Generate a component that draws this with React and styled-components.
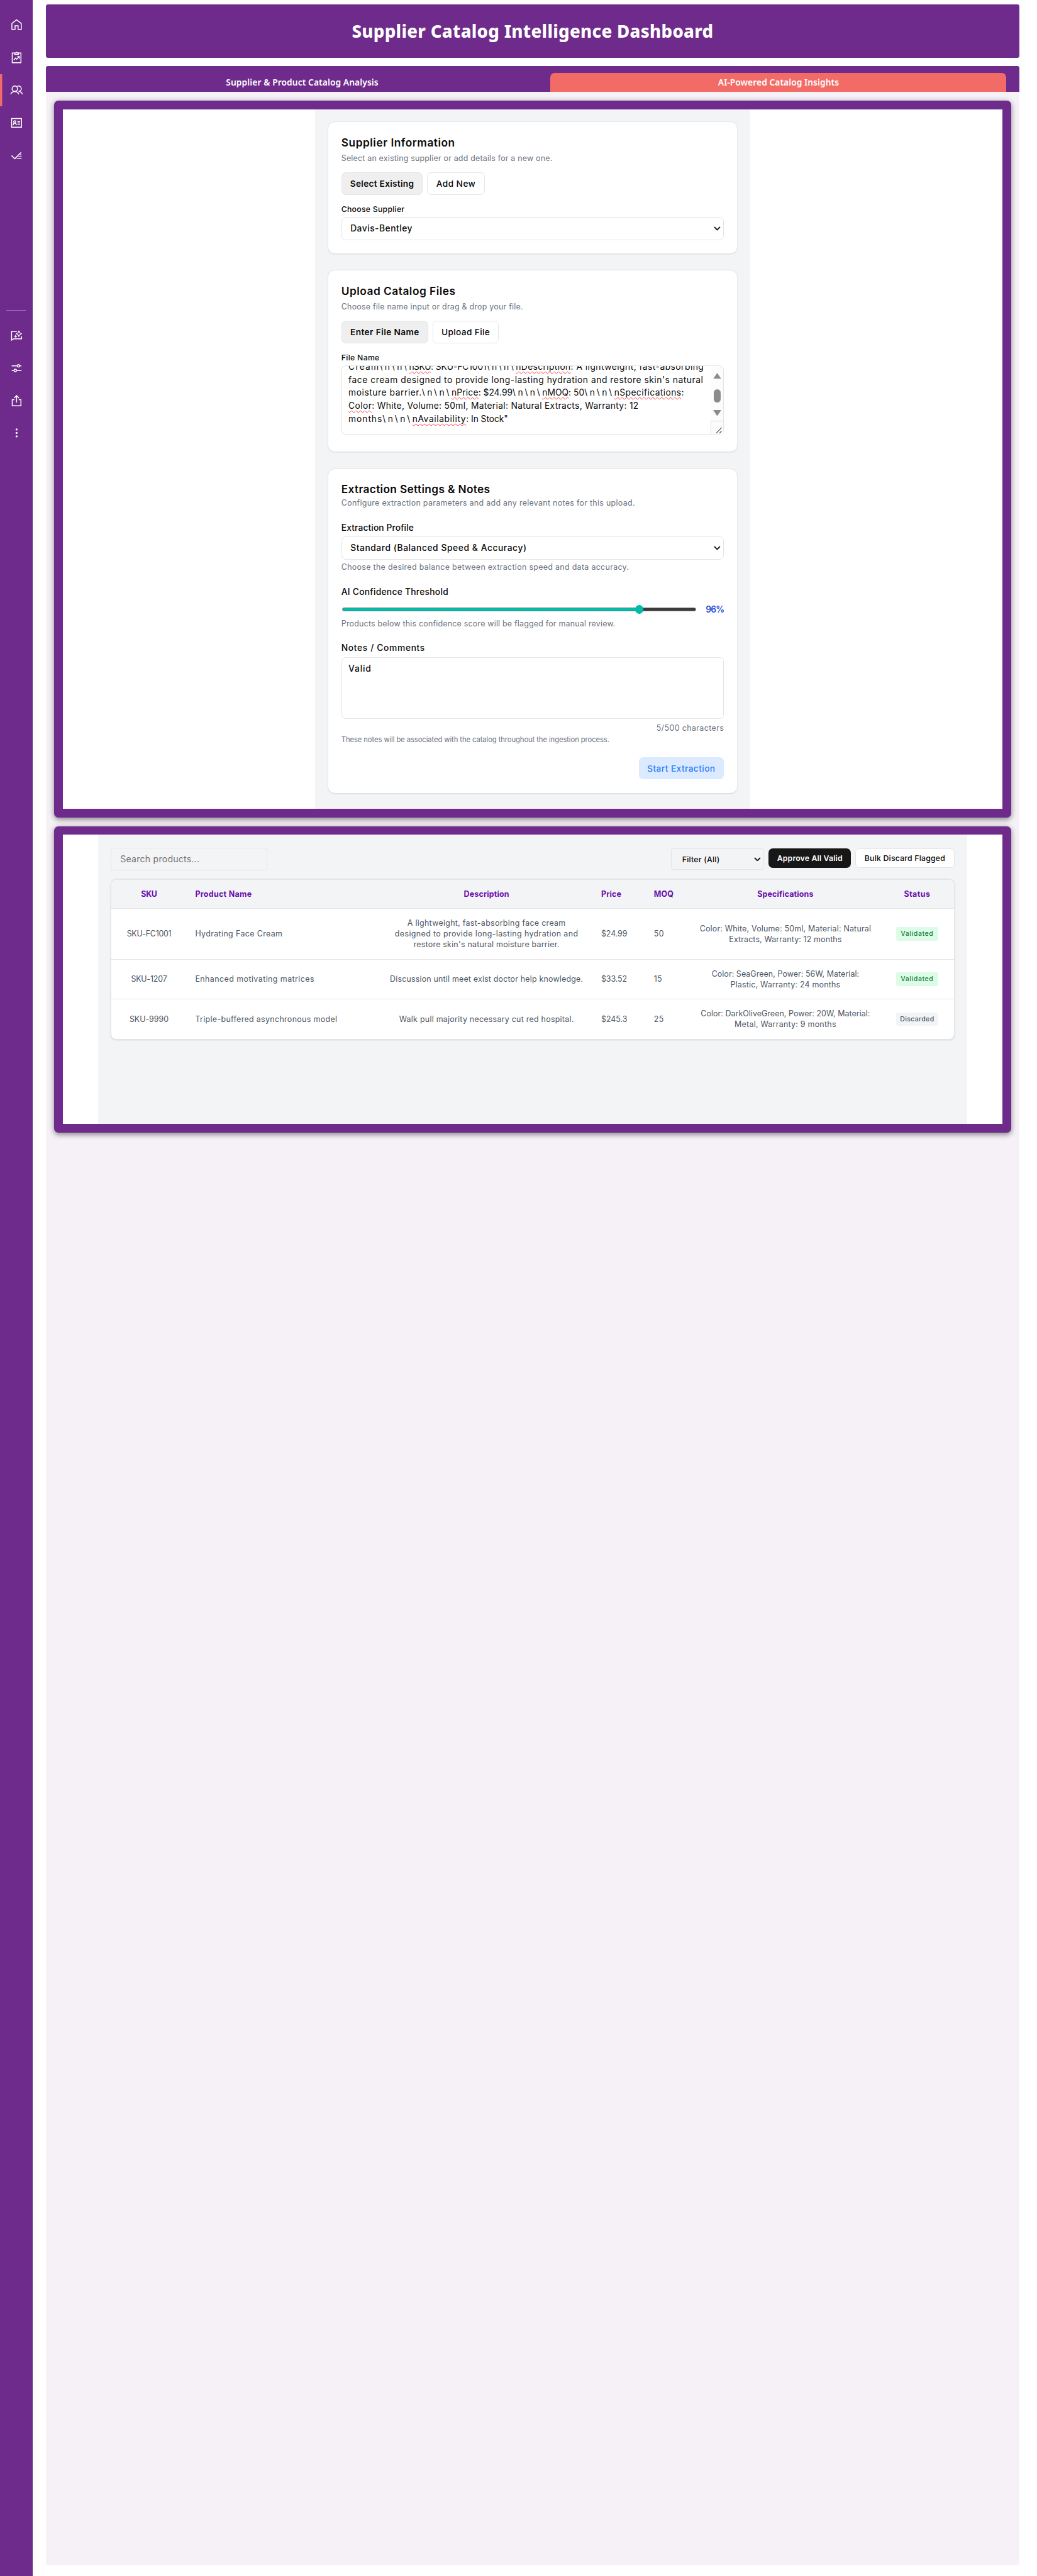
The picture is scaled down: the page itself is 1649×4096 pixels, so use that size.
import React, { useLayoutEffect, useRef, useState } from "react";
import styled, { createGlobalStyle, css } from "styled-components";

/* 1rem stands for ten design pixels */
const ROOT = 8.642;

const Global = createGlobalStyle`
  *, *::before, *::after { box-sizing: border-box; }
  html { font-size: ${ROOT}px; background: #fff; }
  body { margin: 0; font-family: Inter, "Open Sans", sans-serif; font-size: 1.44rem; color: #0a0a0a; }
  button, select, textarea, input { font: inherit; }
`;

/* Inline text set to a given measure by spreading its letters */
const FitSpan = styled.span`
  display: inline-block;
  white-space: pre;
`;

function Fit({ w, tight, children }) {
  const ref = useRef(null);
  const [track, setTrack] = useState(0);
  useLayoutEffect(() => {
    const natural = ref.current.getBoundingClientRect().width;
    const bearing = tight ? 0 : 1.4;
    setTrack((((w + bearing) * ROOT) / 10 - natural) / children.length);
  }, []);
  return (
    <FitSpan ref={ref} style={{ letterSpacing: `${track}px` }}>
      {children}
    </FitSpan>
  );
}

const Page = styled.div`
  display: flex;
  height: 4096px;
  background: #fff;
  overflow: hidden;
`;

const Sidebar = styled.nav`
  width: 6rem;
  flex: none;
  background: #6e2b8b;
  display: flex;
  flex-direction: column;
  padding-top: 1.6rem;
`;

const NavItem = styled.a`
  height: 6rem;
  display: flex;
  align-items: center;
  justify-content: center;
  box-shadow: ${(p) => (p.$active ? "inset 0.4rem 0 #f26b67" : "none")};
  color: #fff;
  svg { width: 2.4rem; height: 2.4rem; display: block; overflow: visible; }
`;

const NavDivider = styled.div`
  height: 1px;
  margin: 25.4rem 1.2rem 1.6rem;
  background: rgba(255, 255, 255, 0.35);
`;

const Main = styled.main`
  flex: 1;
  display: flex;
  flex-direction: column;
  padding: 0.8rem 3.2rem 2rem 2.4rem;
`;

const Banner = styled.header`
  height: 9.8rem;
  flex: none;
  border-radius: 0.4rem;
  background: #6e2b8b;
  display: flex;
  align-items: center;
  justify-content: center;
`;

const BannerTitle = styled.h1`
  margin: 0;
  color: #fff;
  font: 800 3.2rem/4.8rem "Noto Sans", sans-serif;
`;

const TabBar = styled.div`
  height: 4.7rem;
  flex: none;
  margin-top: 1.6rem;
  padding: 1.2rem 2.4rem 0;
  border-radius: 0.4rem 0.4rem 0 0;
  background: #6e2b8b;
  display: flex;
  gap: 0.9rem;
`;

const Tab = styled.div`
  width: ${(p) => p.$w}rem;
  border-radius: 0.8rem 0.8rem 0 0;
  background: ${(p) => (p.$active ? "#f26b67" : "transparent")};
  color: #fff;
  font: 600 1.6rem/3.5rem "Noto Sans", sans-serif;
  text-align: center;
`;

const Content = styled.div`
  flex: 1;
  background: #f5f1f7;
  border-radius: 0 0 0.4rem 0.4rem;
  padding: 1.6rem;
  display: flex;
  flex-direction: column;
  gap: 1.6rem;
`;

const Panel = styled.section`
  height: ${(p) => p.$h}rem;
  flex: none;
  padding: 1.6rem;
  border-radius: 0.8rem;
  background: #6e2b8b;
  box-shadow: 0 0.3rem 1rem rgba(0, 0, 0, 0.45);
`;

const PanelBody = styled.div`
  height: 100%;
  background: #fff;
  display: flex;
  justify-content: center;
`;

const Sheet = styled.div`
  width: ${(p) => p.$w}rem;
  background: #f3f4f6;
  padding: 2.4rem;
`;

const Card = styled.div`
  height: ${(p) => p.$h}rem;
  padding: 2.4rem;
  margin-bottom: 3.2rem;
  border-radius: 1.2rem;
  background: #fff;
  box-shadow: 0 0.1rem 0.3rem rgba(0, 0, 0, 0.14);
`;

const CardTitle = styled.h2`
  margin: 0;
  font-size: 2rem;
  line-height: 2.8rem;
  font-weight: 600;
`;

const Hint = styled.p`
  margin: ${(p) => p.$mt ?? 0.4}rem 0 0;
  font-size: ${(p) => p.$size ?? 1.44}rem;
  line-height: ${(p) => (p.$size ? 1.8 : 2)}rem;
  text-align: ${(p) => (p.$right ? "right" : "left")};
  color: #6b7280;
`;

const Label = styled.div`
  margin-top: ${(p) => p.$mt ?? 1.6}rem;
  margin-bottom: 0.4rem;
  font-size: ${(p) => (p.$large ? 1.6 : 1.42)}rem;
  line-height: ${(p) => (p.$large ? 2.4 : 2)}rem;
  font-weight: 450;
`;

const ButtonRow = styled.div`
  display: flex;
  gap: 0.8rem;
  margin-top: 1.6rem;
`;

const Toggle = styled.button`
  width: ${(p) => p.$w}rem;
  height: 4.2rem;
  padding: 0;
  border: 1px solid #e5e5e5;
  border-radius: 0.8rem;
  background: ${(p) => (p.$on ? "#efefef" : "#fff")};
  color: #0a0a0a;
  font-size: 1.58rem;
  font-weight: ${(p) => (p.$on ? 600 : 450)};
`;

const SelectBox = styled.div`
  height: 4.3rem;
  padding: 0 0.5rem 0 1.55rem;
  border: 1px solid #e5e5e5;
  border-radius: 0.8rem;
  display: flex;
  align-items: center;
  justify-content: space-between;
  font-size: 1.6rem;
  font-weight: 450;
  svg { width: 1.25rem; height: 0.75rem; }
`;

const FileText = styled.div`
  height: 12.8rem;
  border: 1px solid #e5e5e5;
  border-radius: 0.8rem;
  display: flex;
  justify-content: space-between;
  align-items: stretch;
  overflow: hidden;
`;

const FileLines = styled.div`
  padding-left: 1.2rem;
  margin-top: -1rem;
  font-size: 1.6rem;
  line-height: 2.4rem;
  white-space: nowrap;
`;

const Squiggle = styled.span`
  ${FitSpan} {
    text-decoration: underline wavy #ff3b3b 1px;
    text-decoration-skip-ink: none;
    text-underline-offset: 0.2rem;
  }
`;

const Scroller = styled.div`
  width: 2.3rem;
  background: #fcfcfc;
  display: flex;
  flex-direction: column;
`;

const ScrollTrack = styled.div`
  flex: 1;
  display: flex;
  flex-direction: column;
  align-items: center;
  padding-top: 1.3rem;
`;

const Arrow = styled.svg`
  width: 1.5rem;
  height: 1.1rem;
  fill: #8b8b8b;
`;

const Thumb = styled.div`
  width: 1.3rem;
  height: 2.5rem;
  margin: 1.9rem 0 1.3rem;
  border-radius: 0.65rem;
  background: #8b8b8b;
`;

const Grip = styled.div`
  height: 2.4rem;
  border-top: 1px solid #dcdcdc;
  border-left: 1px solid #dcdcdc;
  display: flex;
  align-items: flex-end;
  justify-content: flex-end;
  padding: 0 0.2rem 0.1rem 0;
  svg { width: 1.2rem; height: 1.2rem; }
`;

const SliderRow = styled.div`
  height: 2.4rem;
  margin-top: 0.8rem;
  display: flex;
  align-items: center;
  justify-content: space-between;
  padding-left: 0.1rem;
`;

const Track = styled.div`
  position: relative;
  width: 65.2rem;
  height: 0.8rem;
  border: 1px solid #7d7d7d;
  border-radius: 0.4rem;
  background: linear-gradient(to right, #00bca9 84%, #3b3b3b 84%);
`;

const Knob = styled.div`
  position: absolute;
  left: 53.8rem;
  top: 50%;
  width: 1.5rem;
  height: 1.6rem;
  transform: translateY(-50%);
  border-radius: 50%;
  background: #00bca9;
`;

const Percent = styled.span`
  color: #1d4ed8;
  font-size: 1.6rem;
  font-weight: 600;
`;

const NotesBox = styled.div`
  height: 11.4rem;
  padding: 0.8rem 1.2rem;
  border: 1px solid #e5e5e5;
  border-radius: 0.8rem;
  font-size: 1.6rem;
  line-height: 2.4rem;
  font-weight: 450;
`;

const Footer = styled.div`
  display: flex;
  justify-content: flex-end;
  margin-top: 2.35rem;
`;

const StartButton = styled.button`
  height: 4rem;
  width: 15.7rem;
  padding: 0;
  border: 0;
  border-radius: 0.8rem;
  background: #dbeafe;
  color: #2b7fff;
  font-size: 1.58rem;
  font-weight: 550;
`;

const Toolbar = styled.div`
  display: flex;
  align-items: flex-start;
  gap: 0.8rem;
  height: 4.2rem;
  margin-bottom: 1.6rem;
`;

const Search = styled.div`
  width: 28.8rem;
  height: 4.2rem;
  margin-right: auto;
  padding: 0 1.6rem;
  border: 1px solid #e2e4e8;
  border-radius: 0.4rem;
  color: #757575;
  font-size: 1.64rem;
  line-height: 4rem;
`;

const Filter = styled(SelectBox)`
  width: 17.2rem;
  height: 4rem;
  margin-top: 0.1rem;
  padding-left: 2rem;
  border-color: #e2e4e8;
  border-radius: 0.4rem;
  font-size: 1.42rem;
`;

const Action = styled.button`
  width: ${(p) => p.$w}rem;
  height: 3.6rem;
  margin-top: 0.1rem;
  padding: 0;
  border-radius: 0.8rem;
  font-size: 1.42rem;
  ${(p) =>
    p.$dark
      ? css`border: 0; background: #171717; color: #fff; font-weight: 600;`
      : css`border: 1px solid #e5e5e5; background: #fff; color: #0a0a0a; font-weight: 500;`}
`;

const Table = styled.div`
  border: 1px solid #e3e5e8;
  border-radius: 1rem;
  overflow: hidden;
  background: #fff;
  box-shadow: 0 0.1rem 0.3rem rgba(0, 0, 0, 0.12);
`;

const Row = styled.div`
  display: grid;
  grid-template-columns: 13.8rem 35.7rem 39rem 9.7rem 8.3rem 35rem 1fr;
  align-items: center;
  height: ${(p) => p.$h}rem;
  border-bottom: ${(p) => (p.$last ? 0 : 1)}px solid #e5e5e5;
  color: #4b5563;
  line-height: 2rem;
`;

const HeadRow = styled(Row)`
  background: #f3f4f6;
  color: #6a0dad;
  font-weight: 700;
`;

const Cell = styled.div`
  padding: 0 1.6rem;
  text-align: ${(p) => (p.$center ? "center" : "left")};
  white-space: nowrap;
`;

const Line = styled.div``;

const Badge = styled.span`
  display: inline-flex;
  align-items: center;
  justify-content: center;
  width: 7.7rem;
  height: 2.5rem;
  margin: 0 -1rem;
  border-radius: 0.4rem;
  background: ${(p) => (p.$ok ? "#dcfce7" : "#f3f4f6")};
  color: ${(p) => (p.$ok ? "#15803d" : "#4b5563")};
  font-size: 1.22rem;
  font-weight: 450;
`;

const Icon = ({ children }) => (
  <svg viewBox="0 0 24 24" fill="none" stroke="currentColor" strokeWidth="1.7">
    {children}
  </svg>
);

const Chevron = () => (
  <svg viewBox="0 0 12 7" fill="none" stroke="#111" strokeWidth="2">
    <path d="M1 1l5 5 5-5" />
  </svg>
);

const topIcons = [
  <Icon key="home"><path d="M3.4 20.6V9.8L12 2.9l8.6 6.9v10.8h-5.8v-6.8H9.2v6.8z" /></Icon>,
  <Icon key="report">
    <path d="M8.6 3.8H4v17.8h16V3.8h-4.6" />
    <path d="M8.6 6.4V3.8h1.7a1.8 1.8 0 013.400 0h1.700v2.600z" />
    <path d="M7 16.400l3.100-3.200 2.100 2.100 4.600-4.800M13.200 10.400h3.800v3.800" />
  </Icon>,
  <Icon key="people">
    <circle cx="8.700" cy="9.400" r="5" />
    <path d="M1.200 19.600c1.200-3.400 4-5.200 7.500-5.200s6.200 1.800 7.400 5.200" />
    <path d="M13.200 5.200c.8-.5 1.600-.8 2.500-.8a5 5 0 010 10c3.500 0 5.900 1.800 7.100 5.200" />
  </Icon>,
  <Icon key="card">
    <path d="M2.900 4h18.200v16H2.900z" />
    <circle cx="8.600" cy="10" r="2" />
    <path d="M5.500 16.400c.3-2.600 1.300-3.800 3.100-3.800s2.800 1.200 3.100 3.800M13.500 9.200h5M13.500 12.200h5M13.500 15.200h5" />
  </Icon>,
  <Icon key="check">
    <path d="M2.800 12l6 5.800L20.400 6" />
    <path d="M18.200 10.600h3M15.400 14h5.800M12.400 17.400h8.800" strokeWidth="1.500" />
  </Icon>,
];

const bottomIcons = [
  <Icon key="assist">
    <path d="M12.500 4.600H2.800v16.200l3.900-2.600h14.500v-4.500" />
    <path d="M16.200 3.400c.8 3.600 1.700 4.600 5.400 5.400-3.700.8-4.600 1.800-5.400 5.400-.8-3.600-1.700-4.600-5.400-5.400 3.700-.8 4.600-1.800 5.400-5.400z" />
    <path d="M10.200 11.200v4.600M7.900 13.500h4.600" />
  </Icon>,
  <Icon key="sliders">
    <path d="M3 7.800h10.200M18 7.800h3M3 16.200h4.200M12 16.200h9" />
    <circle cx="15.600" cy="7.800" r="2.200" />
    <circle cx="9.600" cy="16.200" r="2.200" />
  </Icon>,
  <Icon key="share"><path d="M8 9.800H4v11.400h16V9.800h-4M12 15V2.400M7.600 6.800L12 2.400l4.400 4.400" /></Icon>,
  <Icon key="more">
    <g fill="currentColor" stroke="none">
      <circle cx="12" cy="5.600" r="1.900" />
      <circle cx="12" cy="12" r="1.900" />
      <circle cx="12" cy="18.400" r="1.900" />
    </g>
  </Icon>,
];

/* [text, width, flagged by the spell checker] */
const fileLines = [
  [["Cream", 57], ["\\n\\n\\", 54.5], ["nSKU", 40, true], [": SKU-FC1001", 102.5], ["\\n\\n\\", 54], ["nDescription", 101, true], [": A lightweight, fast-absorbing", 245]],
  [["face cream designed to provide long-lasting hydration and restore skin's natural", 653]],
  [["moisture barrier.", 135], ["\\n\\n\\", 54.5], ["nPrice", 49.5, true], [": $24.99", 63], ["\\n\\n\\", 54.5], ["nMOQ", 48.5, true], [": 50", 29], ["\\n\\n\\", 55], ["nSpecifications", 123.5, true], [":", 4]],
  [["Color", 43, true], [": White, Volume: 50ml, Material: Natural Extracts, Warranty: 12", 491]],
  [["months", 62.5], ["\\n\\n\\", 55], ["nAvailability", 99, true], [': In Stock"', 77]],
];

const products = [
  {
    h: 9.35, sku: ["SKU-FC1001", 80.4], name: ["Hydrating Face Cream", 159.4],
    desc: [["A lightweight, fast-absorbing face cream", 290], ["designed to provide long-lasting hydration and", 336], ["restore skin's natural moisture barrier.", 267]],
    price: ["$24.99", 46.5], moq: ["50", 17.2],
    spec: [["Color: White, Volume: 50ml, Material: Natural", 314], ["Extracts, Warranty: 12 months", 206]],
    status: ["Validated", 58.8],
  },
  {
    h: 7.3, sku: ["SKU-1207", 64.7], name: ["Enhanced motivating matrices", 218],
    desc: [["Discussion until meet exist doctor help knowledge.", 354]],
    price: ["$33.52", 46.2], moq: ["15", 13.5],
    spec: [["Color: SeaGreen, Power: 56W, Material:", 270], ["Plastic, Warranty: 24 months", 201]],
    status: ["Validated", 58.8],
  },
  {
    h: 7.3, sku: ["SKU-9990", 70.5], name: ["Triple-buffered asynchronous model", 260],
    desc: [["Walk pull majority necessary cut red hospital.", 320]],
    price: ["$245.3", 46.5], moq: ["25", 16.8],
    spec: [["Color: DarkOliveGreen, Power: 20W, Material:", 310], ["Metal, Warranty: 9 months", 185.6]],
    status: ["Discarded", 61.4],
  },
];

const F = ({ t }) => <Fit w={t[1]}>{t[0]}</Fit>;

export default function App() {
  return (
    <>
      <Global />
      <Page>
        <Sidebar>
          {topIcons.map((icon, i) => <NavItem key={i} $active={i === 2}>{icon}</NavItem>)}
          <NavDivider />
          {bottomIcons.map((icon, i) => <NavItem key={i}>{icon}</NavItem>)}
        </Sidebar>
        <Main>
          <Banner>
            <BannerTitle><Fit w={664}>Supplier Catalog Intelligence Dashboard</Fit></BannerTitle>
          </Banner>
          <TabBar>
            <Tab $w={89.6}><Fit w={279}>Supplier &amp; Product Catalog Analysis</Fit></Tab>
            <Tab $w={83.9} $active><Fit w={221}>AI-Powered Catalog Insights</Fit></Tab>
          </TabBar>
          <Content>
            <Panel $h={131.9}>
              <PanelBody>
                <Sheet $w={80}>
                  <Card $h={24.1}>
                    <CardTitle><Fit w={208}>Supplier Information</Fit></CardTitle>
                    <Hint><Fit w={387}>Select an existing supplier or add details for a new one.</Fit></Hint>
                    <ButtonRow>
                      <Toggle $on $w={15}><Fit w={116}>Select Existing</Fit></Toggle>
                      <Toggle $w={10.6}><Fit w={71}>Add New</Fit></Toggle>
                    </ButtonRow>
                    <Label><Fit w={115}>Choose Supplier</Fit></Label>
                    <SelectBox><Fit w={113}>Davis-Bentley</Fit><Chevron /></SelectBox>
                  </Card>
                  <Card $h={33.3}>
                    <CardTitle><Fit w={209}>Upload Catalog Files</Fit></CardTitle>
                    <Hint><Fit w={333}>Choose file name input or drag &amp; drop your file.</Fit></Hint>
                    <ButtonRow>
                      <Toggle $on $w={16}><Fit w={125.5}>Enter File Name</Fit></Toggle>
                      <Toggle $w={12.2}><Fit w={88}>Upload File</Fit></Toggle>
                    </ButtonRow>
                    <Label><Fit w={69}>File Name</Fit></Label>
                    <FileText>
                      <FileLines>
                        {fileLines.map((line, i) => (
                          <Line key={i}>
                            {line.map(([text, w, bad], j) =>
                              bad
                                ? <Squiggle key={j}><Fit w={w} tight>{text}</Fit></Squiggle>
                                : <Fit key={j} w={w} tight>{text}</Fit>
                            )}
                          </Line>
                        ))}
                      </FileLines>
                      <Scroller>
                        <ScrollTrack>
                          <Arrow viewBox="0 0 15 11"><path d="M7.5 0L15 11H0z" /></Arrow>
                          <Thumb />
                          <Arrow viewBox="0 0 15 11"><path d="M0 0h15L7.5 11z" /></Arrow>
                        </ScrollTrack>
                        <Grip>
                          <svg viewBox="0 0 12 12" stroke="#444" strokeWidth="1.2"><path d="M1 11.5L11 1M7 11.5l4-4.5" /></svg>
                        </Grip>
                      </Scroller>
                    </FileText>
                  </Card>
                  <Card $h={59.6}>
                    <CardTitle><Fit w={272.5}>Extraction Settings &amp; Notes</Fit></CardTitle>
                    <Hint $mt={0}><Fit w={539}>Configure extraction parameters and add any relevant notes for this upload.</Fit></Hint>
                    <Label $large $mt={2.4}><Fit w={132}>Extraction Profile</Fit></Label>
                    <SelectBox><Fit w={323}>Standard (Balanced Speed &amp; Accuracy)</Fit><Chevron /></SelectBox>
                    <Hint><Fit w={528}>Choose the desired balance between extraction speed and data accuracy.</Fit></Hint>
                    <Label $large $mt={2.35}><Fit w={195.6}>AI Confidence Threshold</Fit></Label>
                    <SliderRow>
                      <Track><Knob /></Track>
                      <Percent><Fit w={32}>96%</Fit></Percent>
                    </SliderRow>
                    <Hint><Fit w={503}>Products below this confidence score will be flagged for manual review.</Fit></Hint>
                    <Label $large $mt={2.35}><Fit w={152.7}>Notes / Comments</Fit></Label>
                    <NotesBox><Fit w={40.8}>Valid</Fit></NotesBox>
                    <Hint $right $mt={0.7}><Fit w={123}>5/500 characters</Fit></Hint>
                    <Hint $mt={0.25} $size={1.3}><Fit w={491.6}>These notes will be associated with the catalog throughout the ingestion process.</Fit></Hint>
                    <Footer><StartButton><Fit w={124}>Start Extraction</Fit></StartButton></Footer>
                  </Card>
                </Sheet>
              </PanelBody>
            </Panel>
            <Panel $h={56.4}>
              <PanelBody>
                <Sheet $w={160}>
                  <Toolbar>
                    <Search><Fit w={144.6}>Search products...</Fit></Search>
                    <Filter><Fit w={67.6}>Filter (All)</Fit><Chevron /></Filter>
                    <Action $w={15.2} $dark><Fit w={119}>Approve All Valid</Fit></Action>
                    <Action $w={18.2}><Fit w={147}>Bulk Discard Flagged</Fit></Action>
                  </Toolbar>
                  <Table>
                    <HeadRow $h={5.3}>
                      <Cell $center><Fit w={28}>SKU</Fit></Cell>
                      <Cell><Fit w={102.7}>Product Name</Fit></Cell>
                      <Cell $center><Fit w={82}>Description</Fit></Cell>
                      <Cell><Fit w={35.6}>Price</Fit></Cell>
                      <Cell><Fit w={35}>MOQ</Fit></Cell>
                      <Cell $center><Fit w={102}>Specifications</Fit></Cell>
                      <Cell $center><Fit w={47}>Status</Fit></Cell>
                    </HeadRow>
                    {products.map((p, i) => (
                      <Row key={i} $h={p.h} $last={i === products.length - 1}>
                        <Cell $center><F t={p.sku} /></Cell>
                        <Cell><F t={p.name} /></Cell>
                        <Cell $center>{p.desc.map((t, j) => <Line key={j}><F t={t} /></Line>)}</Cell>
                        <Cell><F t={p.price} /></Cell>
                        <Cell><F t={p.moq} /></Cell>
                        <Cell $center>{p.spec.map((t, j) => <Line key={j}><F t={t} /></Line>)}</Cell>
                        <Cell $center><Badge $ok={p.status[0] === "Validated"}><F t={p.status} /></Badge></Cell>
                      </Row>
                    ))}
                  </Table>
                </Sheet>
              </PanelBody>
            </Panel>
          </Content>
        </Main>
      </Page>
    </>
  );
}
